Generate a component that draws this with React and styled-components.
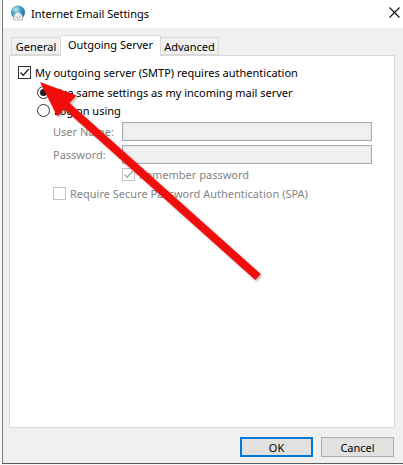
import React from "react";
import styled, { createGlobalStyle } from "styled-components";

const GlobalStyle = createGlobalStyle`
  html, body {
    margin: 0;
    padding: 0;
    background: #ececec;
    overflow: hidden;
  }
  * { box-sizing: border-box; }
`;

const FONT = `"Noto Sans", "Open Sans", sans-serif`;

export default function App() {
  return (
    <Stage>
      <GlobalStyle />
      <Window>
        <TitleBar>
          <AppIcon />
          <Title>Internet Email Settings</Title>
          <CloseButton aria-label="Close">
            <svg width="11" height="11" viewBox="0 0 11 11">
              <path d="M0.5 0.5 L10.5 10.5 M10.5 0.5 L0.5 10.5" stroke="#111" strokeWidth="1.1" />
            </svg>
          </CloseButton>
        </TitleBar>

        <Body>
          <TabRow>
            <Tab width={50}>General</Tab>
            <Tab active width={100}>Outgoing Server</Tab>
            <Tab width={58}>Advanced</Tab>
          </TabRow>

          <Panel>
            <OptionRow>
              <CheckBox checked />
              <Label>My outgoing server (SMTP) requires authentication</Label>
            </OptionRow>

            <Indented>
              <OptionRow>
                <Radio selected />
                <Label>Use same settings as my incoming mail server</Label>
              </OptionRow>
              <OptionRow>
                <Radio />
                <Label>Log on using</Label>
              </OptionRow>
            </Indented>

            <FieldGrid>
              <FieldLabel>User Name:</FieldLabel>
              <TextBox disabled />
              <FieldLabel>Password:</FieldLabel>
              <TextBox disabled />
              <span />
              <OptionRow dense>
                <CheckBox checked disabled />
                <Label disabled>Remember password</Label>
              </OptionRow>
            </FieldGrid>

            <SpaRow>
              <CheckBox disabled />
              <Label disabled>Require Secure Password Authentication (SPA)</Label>
            </SpaRow>
          </Panel>

          <ButtonRow>
            <Button primary>OK</Button>
            <Button>Cancel</Button>
          </ButtonRow>
        </Body>
      </Window>
      <Arrow />
    </Stage>
  );
}

function AppIcon() {
  return (
    <IconBox>
      <svg width="16" height="16" viewBox="0 0 16 16">
        <defs>
          <radialGradient id="globe" cx="0.35" cy="0.3" r="0.8">
            <stop offset="0" stopColor="#bfe6f5" />
            <stop offset="0.45" stopColor="#3a9fc4" />
            <stop offset="1" stopColor="#1d5f86" />
          </radialGradient>
        </defs>
        <circle cx="8" cy="7.5" r="7" fill="url(#globe)" />
        <path d="M3.5 10 L8 6.5 L12.5 10 L12.5 15 L3.5 15 Z" fill="#e9eef1" stroke="#8e9aa3" strokeWidth="0.6" />
        <path d="M3.5 10 L8 13 L12.5 10" fill="none" stroke="#8e9aa3" strokeWidth="0.6" />
      </svg>
    </IconBox>
  );
}

function CheckBox({ checked, disabled }) {
  return (
    <Box disabled={disabled}>
      {checked && (
        <svg width="11" height="11" viewBox="0 0 11 11">
          <path
            d="M1.5 5.5 L4.2 8.3 L9.6 2.2"
            fill="none"
            stroke={disabled ? "#a8a8a8" : "#222"}
            strokeWidth="1.3"
          />
        </svg>
      )}
    </Box>
  );
}

function Arrow() {
  return (
    <ArrowLayer width="403" height="465" viewBox="0 0 403 465">
      <defs>
        <filter id="shade" x="-10%" y="-10%" width="120%" height="120%">
          <feDropShadow dx="1.5" dy="1.5" stdDeviation="1.2" floodColor="#000" floodOpacity="0.3" />
        </filter>
      </defs>
      <polygon
        points="40,82 76.5,95.4 69.6,103 260.7,274 255.3,280 64.2,109 57.4,116.6"
        fill="#f20f0f"
        filter="url(#shade)"
      />
    </ArrowLayer>
  );
}

const Stage = styled.div`
  position: relative;
  width: 403px;
  height: 465px;
  padding-left: 2px;
  background: #f6f6f6;
  font-family: ${FONT};
`;

const Window = styled.div`
  width: 401px;
  height: 464px;
  display: flex;
  flex-direction: column;
  border-left: 1px solid #7b7b7b;
  border-bottom: 1px solid #5a5a5a;
  background: #f0f0f0;
`;

const TitleBar = styled.div`
  height: 28px;
  flex: none;
  display: flex;
  align-items: center;
  padding-left: 7px;
  background: #ffffff;
`;

const IconBox = styled.div`
  width: 16px;
  height: 16px;
  display: flex;
  margin-top: -2px;
`;

const Title = styled.div`
  margin-left: 5px;
  font-size: 11px;
  color: #000;
  flex: 1;
  margin-top: -2px;
`;

const CloseButton = styled.div`
  width: 46px;
  height: 28px;
  display: flex;
  align-items: center;
  justify-content: center;
  margin-right: -14px;
  margin-top: -3px;
`;

const Body = styled.div`
  flex: 1;
  display: flex;
  flex-direction: column;
  padding: 7px 8px 7px 6px;
`;

const TabRow = styled.div`
  display: flex;
  align-items: flex-end;
  height: 20px;
  padding-left: 2px;
  position: relative;
  z-index: 1;
`;

const Tab = styled.div`
  width: ${(p) => p.width}px;
  height: ${(p) => (p.active ? "21px" : "18px")};
  margin-bottom: ${(p) => (p.active ? "-1px" : "0")};
  padding-top: 1px;
  text-align: center;
  font-size: 11px;
  color: #000;
  background: ${(p) => (p.active ? "#ffffff" : "#f0f0f0")};
  border: 1px solid #d9d9d9;
  border-bottom: ${(p) => (p.active ? "none" : "1px solid #d9d9d9")};
  white-space: nowrap;
  & + & {
    border-left: ${(p) => (p.active ? "1px solid #d9d9d9" : "none")};
  }
`;

const Panel = styled.div`
  height: 373px;
  flex: none;
  background: #ffffff;
  border: 1px solid #d9d9d9;
  padding: 7px 8px 0 8px;
`;

const OptionRow = styled.div`
  display: flex;
  align-items: center;
  gap: 4px;
  height: ${(p) => (p.dense ? "13px" : "18px")};
`;

const Indented = styled.div`
  display: flex;
  flex-direction: column;
  padding-left: 19px;
  margin-top: 2px;
`;

const Label = styled.span`
  font-size: 11px;
  color: ${(p) => (p.disabled ? "#858585" : "#000")};
  white-space: nowrap;
`;

const Box = styled.div`
  width: 13px;
  height: 13px;
  flex: none;
  display: flex;
  align-items: center;
  justify-content: center;
  background: #fff;
  border: 1px solid ${(p) => (p.disabled ? "#c4c4c4" : "#333")};
`;

const Radio = styled.div`
  width: 13px;
  height: 13px;
  flex: none;
  border-radius: 50%;
  border: 1px solid #333;
  background: #fff;
  display: flex;
  align-items: center;
  justify-content: center;
  &::after {
    content: "";
    width: 7px;
    height: 7px;
    border-radius: 50%;
    background: ${(p) => (p.selected ? "#222" : "transparent")};
  }
`;

const FieldGrid = styled.div`
  display: grid;
  grid-template-columns: 69px 250px;
  row-gap: 4px;
  align-items: center;
  padding-left: 35px;
  margin-top: 3px;
`;

const FieldLabel = styled.span`
  font-size: 11px;
  color: #858585;
`;

const TextBox = styled.input`
  height: 19px;
  width: 250px;
  background: #f0f0f0;
  border: 1px solid #a4adb7;
  box-shadow: inset 0 0 0 1px #e6e9ec;
  outline: none;
  padding: 0;
`;

const SpaRow = styled.div`
  display: flex;
  align-items: center;
  gap: 4px;
  padding-left: 35px;
  margin-top: 5px;
`;

const ButtonRow = styled.div`
  display: flex;
  justify-content: flex-end;
  gap: 8px;
  padding-top: 9px;
  padding-right: 1px;
`;

const Button = styled.div`
  width: 73px;
  height: 20px;
  display: flex;
  align-items: center;
  justify-content: center;
  font-size: 11px;
  color: #000;
  background: #e1e1e1;
  border: ${(p) => (p.primary ? "2px solid #0078d7" : "1px solid #adadad")};
`;

const ArrowLayer = styled.svg`
  position: absolute;
  left: 0;
  top: 0;
  pointer-events: none;
`;
